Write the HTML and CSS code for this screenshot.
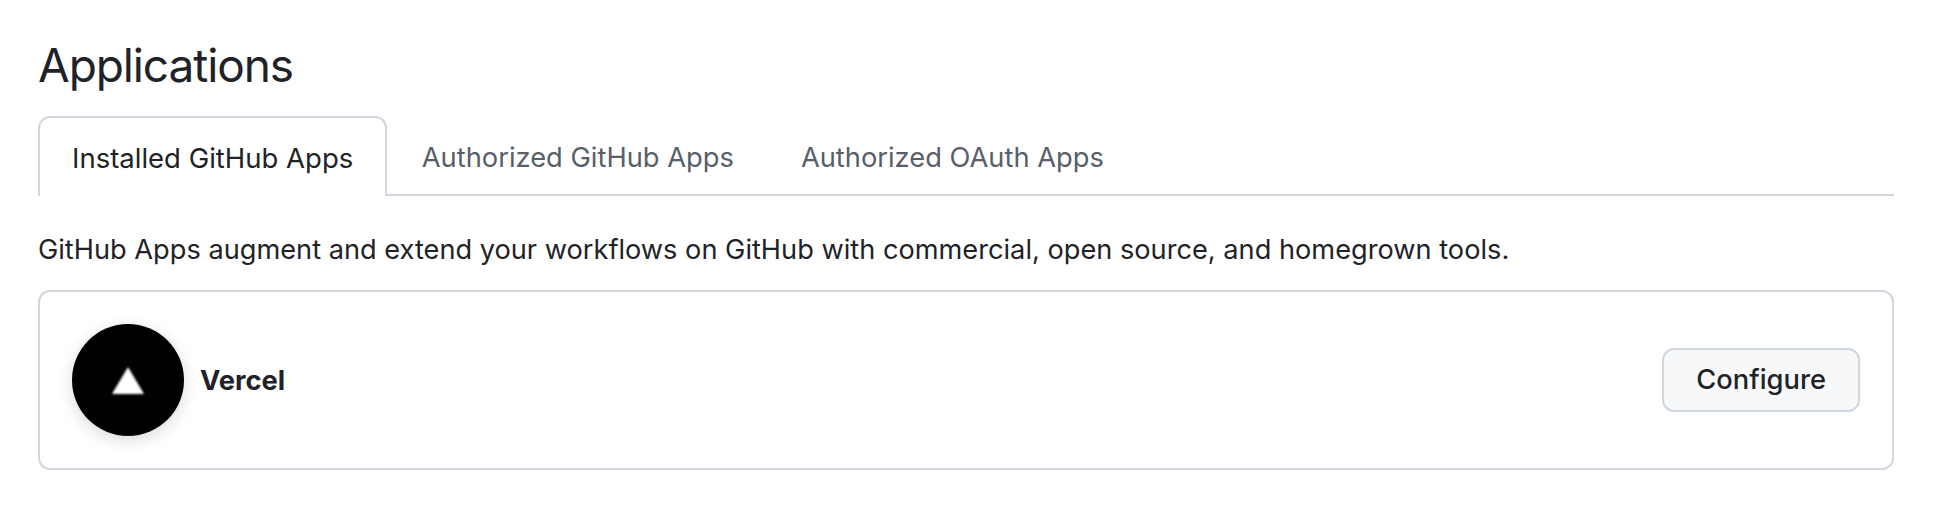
FILE: index.html
```html
<!DOCTYPE html>
<html lang="en">
<head>
    <meta charset="UTF-8">
    <meta name="viewport" content="width=device-width, initial-scale=1.0">
    <title>Applications</title>
    <link rel="stylesheet" href="styles.css">
</head>
<body>

    <div class="container">
        <h1>Applications</h1>

        <nav class="tabs">
            <a href="#installed" class="tab selected">Installed GitHub Apps</a>
            <a href="#authorized" class="tab">Authorized GitHub Apps</a>
            <a href="#oauth" class="tab">Authorized OAuth Apps</a>
        </nav>

        <p class="note">GitHub Apps augment and extend your workflows on GitHub with commercial, open source, and homegrown tools.</p>

        <div class="app-list">
            <div class="app-info">
                <div class="avatar">
                    <svg class="logo" width="32" height="27" viewBox="0 0 32 27"><path d="M16 0 L32 27 L0 27 Z" fill="#fff"/></svg>
                </div>
                <strong>Vercel</strong>
            </div>
            <a href="#configure" class="btn">Configure</a>
        </div>
    </div>

</body>
</html>
```

FILE: styles.css
```css
body {
    font-family: 'Inter', 'Liberation Sans', sans-serif;
    background-color: #fff;
    color: #1f2328;
    margin: 0;
    padding: 0;
}

.container {
    padding: 36px 62px 0 38px;
}

h1 {
    font-size: 46px;
    font-weight: 400;
    letter-spacing: -1.1px;
    line-height: 58px;
    margin: 0 0 22px;
}

.tabs {
    display: flex;
    gap: 2px;
    height: 78px;
    border-bottom: 2px solid #d0d7de;
}

.tab {
    color: #57606a;
    font-size: 27.3px;
    line-height: 84px;
    padding: 0 32.5px;
    text-decoration: none;
}

.tab.selected {
    color: #1f2328;
    background-color: #fff;
    border: 2px solid #d0d7de;
    border-bottom: none;
    border-radius: 12px 12px 0 0;
    font-size: 27.5px;
    height: 78px;
    line-height: 80px;
    margin-bottom: -2px;
    padding: 0 32px;
}

.note {
    font-size: 27.2px;
    line-height: 42px;
    margin: 33px 0 19px;
}

.app-list {
    display: flex;
    align-items: center;
    justify-content: space-between;
    border: 2px solid #d0d7de;
    border-radius: 12px;
    padding: 32px;
}

.app-info {
    display: flex;
    align-items: center;
    gap: 16px;
    font-size: 27.3px;
}

.avatar {
    width: 112px;
    height: 112px;
    border-radius: 50%;
    background-color: #000;
    box-shadow: 0 4px 16px rgba(0, 0, 0, 0.15);
    display: flex;
    align-items: center;
    justify-content: center;
}

.logo {
    filter: blur(0.8px);
}

.btn {
    color: #1f2328;
    background-color: #f6f8fa;
    border: 2px solid #d0d7de;
    border-radius: 12px;
    font-size: 27.3px;
    font-weight: 500;
    line-height: 60px;
    padding: 0 32px;
    text-decoration: none;
}
```
